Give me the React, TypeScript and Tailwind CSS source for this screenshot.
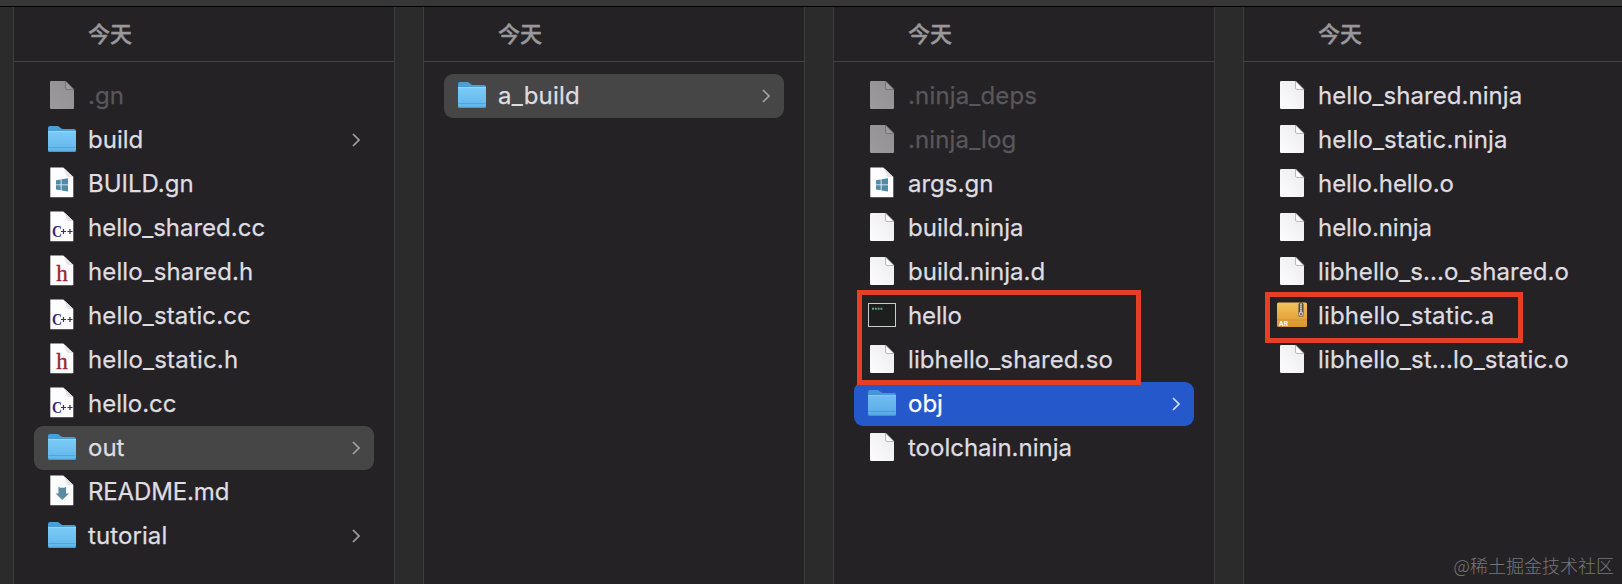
import React from "react";

type Kind = "doc" | "folder" | "win" | "cpp" | "h" | "md" | "exec" | "ar";
type Item = { name: string; kind: Kind; dim?: boolean; selected?: "gray" | "blue"; arrow?: boolean; tracking?: string };

const Page = ({ children }: { children?: React.ReactNode }) => (
  <svg width="30" height="44" viewBox="0 0 30 44">
    <path d="M3.300 5.500h13L26.300 15v20.200H3.300z" fill="#fdfdfe" />
    <path d="M16.300 5.500 26.300 15h-5q-1.600 0-1.900-2-.5-5.500-3.100-7.500z" fill="#e4e3e6" />
    {children}
  </svg>
);

function Icon({ kind, blue }: { kind: Kind; blue?: boolean }) {
  switch (kind) {
    case "folder":
      return (
        <svg width="30" height="44" viewBox="0 0 30 44" opacity={blue ? 0.88 : 1}>
          <defs>
            <linearGradient id="folderFront" x1="0" y1="0" x2="0" y2="1">
              <stop offset="0" stopColor="#7ccbf7" />
              <stop offset="1" stopColor="#5fb5ea" />
            </linearGradient>
          </defs>
          <path d="M1 10q0-2 2-2h7q1.500 0 2.500 1l1.500 1.300q.8.700 2 .7h11q2 0 2 2v4H1z" fill="#4a9fd8" />
          <path d="M1 13.500h28V32q0 2-2 2H3q-2 0-2-2z" fill="url(#folderFront)" />
          <path d="M1 13.500h28" stroke="#8fd6fb" />
          <path d="M1.500 29.500h27" stroke="#4b9fd4" strokeWidth=".8" />
          <path d="M1.500 33.300h27" stroke="#4794ca" />
        </svg>
      );
    case "win":
      return (
        <Page>
          <path d="M9 18.200l4.700-.8v5.100H9zM14.500 17.300l6.500-1v6.200h-6.500zM9 23.300h4.700v5L9 27.600zM14.500 23.300H21v6.100l-6.500-1z" fill="#4f8bab" />
        </Page>
      );
    case "md":
      return (
        <Page>
          <path d="M11.500 16.500l1.700 1.200h4.200l1.700-1.200v7h2.900l-6.700 6.500-6.700-6.500h2.900z" fill="#5b8aa0" />
        </Page>
      );
    case "cpp":
      return (
        <Page>
          <text x="5" y="30.700" fontSize="17" fontWeight="bold" fontFamily="Liberation Serif, serif" fill="#332c73" textLength="10" lengthAdjust="spacingAndGlyphs">C</text>
          <path d="M14 25.500h5M16.500 23v5M20.500 25.500h5M23 23v5" stroke="#332c73" strokeWidth="1.200" />
        </Page>
      );
    case "h":
      return (
        <Page>
          <text x="15" y="31" fontSize="23" textAnchor="middle" fontFamily="Liberation Serif, serif" fill="#96242f" stroke="#96242f" strokeWidth=".3">h</text>
        </Page>
      );
    case "exec":
      return (
        <svg width="30" height="44" viewBox="0 0 30 44">
          <rect x="1.500" y="9.500" width="27" height="23" fill="#1c1f1e" stroke="#c9cccb" />
          <path d="M5 14.800h11" stroke="#5fa67c" strokeWidth="2" strokeDasharray="2 .8" />
        </svg>
      );
    case "ar":
      return (
        <svg width="30" height="44" viewBox="0 0 30 44">
          <defs>
            <linearGradient id="archive" x1="0" y1="0" x2="0" y2="1">
              <stop offset="0" stopColor="#f3c45c" />
              <stop offset="1" stopColor="#dc9330" />
            </linearGradient>
          </defs>
          <rect x="0" y="8.500" width="30" height="24.500" rx="1.500" fill="url(#archive)" />
          <path d="M0 26h30" stroke="#cf8a2c" strokeWidth=".7" />
          <rect x="21.500" y="8.500" width="5" height="14.500" rx="2" fill="#4d4a45" />
          <path d="M24 9.500v9" stroke="#e8e4da" strokeWidth="2" strokeDasharray="1.200 .8" />
          <rect x="22.700" y="18" width="2.600" height="4" rx="1" fill="none" stroke="#f3efe5" />
          <text x="1.800" y="31.500" fontSize="6.500" fontWeight="bold" fontFamily="Inter, sans-serif" fill="#fff">AR</text>
        </svg>
      );
    default:
      return (
        <svg width="30" height="44" viewBox="0 0 30 44">
          <defs>
            <linearGradient id="paper" x1="0" y1="1" x2="1" y2="0">
              <stop offset="0" stopColor="#fdfdfe" />
              <stop offset="1" stopColor="#ebeaed" />
            </linearGradient>
          </defs>
          <path d="M4.200 7H18.500L27 15.500V33.800q0 1.200-1.200 1.200H4.200Q3 35 3 33.800V8.200Q3 7 4.200 7z" fill="url(#paper)" />
          <path d="M18.500 7 27 15.500h-7q-1.500 0-1.500-1.500z" fill="#fff" stroke="#9c9b9f" strokeWidth=".7" />
        </svg>
      );
  }
}

const columns: Item[][] = [
  [
    { name: ".gn", kind: "doc", dim: true },
    { name: "build", kind: "folder", arrow: true },
    { name: "BUILD.gn", kind: "win" },
    { name: "hello_shared.cc", kind: "cpp" },
    { name: "hello_shared.h", kind: "h", tracking: "tracking-[0.1px]" },
    { name: "hello_static.cc", kind: "cpp", tracking: "tracking-[0.13px]" },
    { name: "hello_static.h", kind: "h", tracking: "tracking-[0.18px]" },
    { name: "hello.cc", kind: "cpp" },
    { name: "out", kind: "folder", arrow: true, selected: "gray" },
    { name: "README.md", kind: "md", tracking: "tracking-[-0.13px]" },
    { name: "tutorial", kind: "folder", arrow: true, tracking: "tracking-[0.1px]" },
  ],
  [{ name: "a_build", kind: "folder", arrow: true, selected: "gray", tracking: "tracking-[0.2px]" }],
  [
    { name: ".ninja_deps", kind: "doc", dim: true, tracking: "tracking-[0.16px]" },
    { name: ".ninja_log", kind: "doc", dim: true, tracking: "tracking-[0.13px]" },
    { name: "args.gn", kind: "win" },
    { name: "build.ninja", kind: "doc" },
    { name: "build.ninja.d", kind: "doc" },
    { name: "hello", kind: "exec", tracking: "tracking-[-0.1px]" },
    { name: "libhello_shared.so", kind: "doc", tracking: "tracking-[0.1px]" },
    { name: "obj", kind: "folder", arrow: true, selected: "blue" },
    { name: "toolchain.ninja", kind: "doc" },
  ],
  [
    { name: "hello_shared.ninja", kind: "doc", tracking: "tracking-[0.06px]" },
    { name: "hello_static.ninja", kind: "doc", tracking: "tracking-[0.15px]" },
    { name: "hello.hello.o", kind: "doc", tracking: "tracking-[-0.06px]" },
    { name: "hello.ninja", kind: "doc", tracking: "tracking-[-0.06px]" },
    { name: "libhello_s...o_shared.o", kind: "doc", tracking: "tracking-[0.08px]" },
    { name: "libhello_static.a", kind: "ar", tracking: "tracking-[0.18px]" },
    { name: "libhello_st...lo_static.o", kind: "doc", tracking: "tracking-[0.17px]" },
  ],
];

function Row({ item }: { item: Item }) {
  const bg = item.selected === "gray" ? "bg-[#464646]" : item.selected === "blue" ? "bg-[#2458cb]" : "";
  const color = item.dim ? "text-[#59575b]" : item.selected === "blue" ? "text-white" : "text-[#dfdde0]";
  return (
    <div className={`flex h-11 w-[340px] items-center rounded-[9px] pl-[13px] pr-3 ${bg}`}>
      <div className={`h-11 w-[30px] shrink-0 ${item.dim ? "opacity-55" : ""}`}>
        <Icon kind={item.kind} blue={item.selected === "blue"} />
      </div>
      <span className={`ml-[11px] whitespace-nowrap text-[24px] leading-[44px] [-webkit-text-stroke:0.25px] ${item.tracking ?? ""} ${color}`}>
        {item.name}
      </span>
      {item.arrow && (
        <svg className="mb-px ml-auto" width="12" height="16" viewBox="0 0 12 16">
          <path d="M3 2l6 6-6 6" fill="none" stroke={item.selected === "blue" ? "#d3e0f8" : "#a3a2a4"} strokeWidth="1.700" />
        </svg>
      )}
    </div>
  );
}

export default function App() {
  return (
    <div className="relative flex h-[584px] w-[1622px] flex-col overflow-hidden bg-[#2b2b2b] font-['Inter','Noto_Sans_CJK_SC',sans-serif]">
      <div className="h-[7px] shrink-0 border-b border-black bg-[#373737]" />
      <div className="flex min-h-0 flex-1 gap-7 pl-[13px]">
        {columns.map((items, c) => (
          <div key={c} className="relative w-[382px] shrink-0 border-x border-[#3d3c3e] bg-[#252226]">
            <div className="flex h-[55px] items-center border-b border-[#454447] bg-[#242225] pl-[74px] text-[22px] font-medium text-[#9a989b] [-webkit-text-stroke:0.4px]">
              今天
            </div>
            <div className="flex flex-col pl-5 pt-3">
              {items.map((item) => (
                <Row key={item.name} item={item} />
              ))}
            </div>
            {c === 2 && <div className="absolute left-[23px] top-[283px] h-[95px] w-[284px] border-[5px] border-[#e53f26]" />}
            {c === 3 && <div className="absolute left-[21px] top-[285px] h-[51px] w-[258px] border-[5px] border-[#e53f26]" />}
          </div>
        ))}
      </div>
      <div className="absolute bottom-[7px] right-[8px] font-['Noto_Sans_CJK_SC',sans-serif] text-[18px] font-light leading-[24px] text-[#78767a]">@稀土掘金技术社区</div>
    </div>
  );
}
